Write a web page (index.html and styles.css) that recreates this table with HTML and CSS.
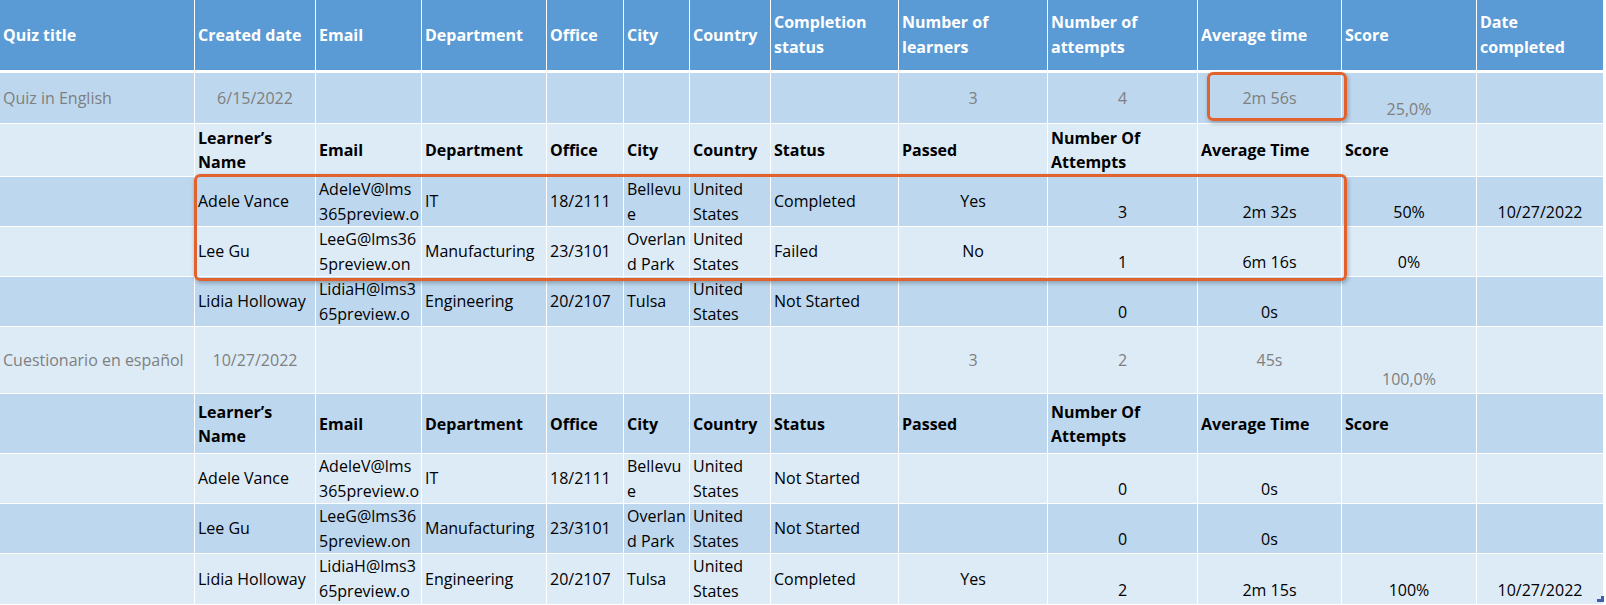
FILE: index.html
```html
<!DOCTYPE html>
<html lang="en">
<head>
<meta charset="utf-8">
<title>Quiz report</title>
<link rel="stylesheet" href="styles.css">
</head>
<body>
<div class="sheet">
  <div class="row head">
    <div class="cell">Quiz title</div>
    <div class="cell">Created date</div>
    <div class="cell">Email</div>
    <div class="cell">Department</div>
    <div class="cell">Office</div>
    <div class="cell">City</div>
    <div class="cell">Country</div>
    <div class="cell">Completion<br>status</div>
    <div class="cell">Number of<br>learners</div>
    <div class="cell">Number of<br>attempts</div>
    <div class="cell">Average time</div>
    <div class="cell">Score</div>
    <div class="cell">Date<br>completed</div>
  </div>

  <div class="row quiz band-a h-quiz1">
    <div class="cell">Quiz in English</div>
    <div class="cell center">6/15/2022</div>
    <div class="cell"></div>
    <div class="cell"></div>
    <div class="cell"></div>
    <div class="cell"></div>
    <div class="cell"></div>
    <div class="cell"></div>
    <div class="cell center">3</div>
    <div class="cell center">4</div>
    <div class="cell center">2m 56s</div>
    <div class="cell center bottom">25,0%</div>
    <div class="cell"></div>
  </div>

  <div class="row sub band-b h-sub1">
    <div class="cell"></div>
    <div class="cell">Learner’s<br>Name</div>
    <div class="cell">Email</div>
    <div class="cell">Department</div>
    <div class="cell">Office</div>
    <div class="cell">City</div>
    <div class="cell">Country</div>
    <div class="cell">Status</div>
    <div class="cell">Passed</div>
    <div class="cell">Number Of<br>Attempts</div>
    <div class="cell">Average Time</div>
    <div class="cell">Score</div>
    <div class="cell"></div>
  </div>

  <div class="row band-a h-data">
    <div class="cell"></div>
    <div class="cell">Adele Vance</div>
    <div class="cell">AdeleV@lms<br>365preview.o</div>
    <div class="cell">IT</div>
    <div class="cell">18/2111</div>
    <div class="cell">Bellevu<br>e</div>
    <div class="cell">United<br>States</div>
    <div class="cell">Completed</div>
    <div class="cell center">Yes</div>
    <div class="cell center bottom">3</div>
    <div class="cell center bottom">2m 32s</div>
    <div class="cell center bottom">50%</div>
    <div class="cell center bottom">10/27/2022</div>
  </div>

  <div class="row band-b h-data">
    <div class="cell"></div>
    <div class="cell">Lee Gu</div>
    <div class="cell">LeeG@lms36<br>5preview.on</div>
    <div class="cell">Manufacturing</div>
    <div class="cell">23/3101</div>
    <div class="cell">Overlan<br>d Park</div>
    <div class="cell">United<br>States</div>
    <div class="cell">Failed</div>
    <div class="cell center">No</div>
    <div class="cell center bottom">1</div>
    <div class="cell center bottom">6m 16s</div>
    <div class="cell center bottom">0%</div>
    <div class="cell"></div>
  </div>

  <div class="row band-a h-data">
    <div class="cell"></div>
    <div class="cell">Lidia Holloway</div>
    <div class="cell">LidiaH@lms3<br>65preview.o</div>
    <div class="cell">Engineering</div>
    <div class="cell">20/2107</div>
    <div class="cell">Tulsa</div>
    <div class="cell">United<br>States</div>
    <div class="cell">Not Started</div>
    <div class="cell"></div>
    <div class="cell center bottom">0</div>
    <div class="cell center bottom">0s</div>
    <div class="cell"></div>
    <div class="cell"></div>
  </div>

  <div class="row quiz band-b h-quiz2">
    <div class="cell">Cuestionario en español</div>
    <div class="cell center">10/27/2022</div>
    <div class="cell"></div>
    <div class="cell"></div>
    <div class="cell"></div>
    <div class="cell"></div>
    <div class="cell"></div>
    <div class="cell"></div>
    <div class="cell center">3</div>
    <div class="cell center">2</div>
    <div class="cell center">45s</div>
    <div class="cell center bottom">100,0%</div>
    <div class="cell"></div>
  </div>

  <div class="row sub band-a h-sub2">
    <div class="cell"></div>
    <div class="cell">Learner’s<br>Name</div>
    <div class="cell">Email</div>
    <div class="cell">Department</div>
    <div class="cell">Office</div>
    <div class="cell">City</div>
    <div class="cell">Country</div>
    <div class="cell">Status</div>
    <div class="cell">Passed</div>
    <div class="cell">Number Of<br>Attempts</div>
    <div class="cell">Average Time</div>
    <div class="cell">Score</div>
    <div class="cell"></div>
  </div>

  <div class="row band-b h-data">
    <div class="cell"></div>
    <div class="cell">Adele Vance</div>
    <div class="cell">AdeleV@lms<br>365preview.o</div>
    <div class="cell">IT</div>
    <div class="cell">18/2111</div>
    <div class="cell">Bellevu<br>e</div>
    <div class="cell">United<br>States</div>
    <div class="cell">Not Started</div>
    <div class="cell"></div>
    <div class="cell center bottom">0</div>
    <div class="cell center bottom">0s</div>
    <div class="cell"></div>
    <div class="cell"></div>
  </div>

  <div class="row band-a h-data">
    <div class="cell"></div>
    <div class="cell">Lee Gu</div>
    <div class="cell">LeeG@lms36<br>5preview.on</div>
    <div class="cell">Manufacturing</div>
    <div class="cell">23/3101</div>
    <div class="cell">Overlan<br>d Park</div>
    <div class="cell">United<br>States</div>
    <div class="cell">Not Started</div>
    <div class="cell"></div>
    <div class="cell center bottom">0</div>
    <div class="cell center bottom">0s</div>
    <div class="cell"></div>
    <div class="cell"></div>
  </div>

  <div class="row band-b h-last">
    <div class="cell"></div>
    <div class="cell">Lidia Holloway</div>
    <div class="cell">LidiaH@lms3<br>65preview.o</div>
    <div class="cell">Engineering</div>
    <div class="cell">20/2107</div>
    <div class="cell">Tulsa</div>
    <div class="cell">United<br>States</div>
    <div class="cell">Completed</div>
    <div class="cell center">Yes</div>
    <div class="cell center bottom">2</div>
    <div class="cell center bottom">2m 15s</div>
    <div class="cell center bottom">100%</div>
    <div class="cell center bottom">10/27/2022</div>
  </div>

  <div class="callout callout-avg"></div>
  <div class="callout callout-rows"></div>
  <svg class="resize-handle" width="7" height="6" viewBox="0 0 7 6" aria-hidden="true">
    <polygon points="4,0 7,0 7,6 0,6 0,3 4,3" fill="#3f5fae"/>
  </svg>
</div>
</body>
</html>
```

FILE: styles.css
```css
html, body {
  margin: 0;
  padding: 0;
  background: #ffffff;
}

body {
  font-family: "Open Sans", "Noto Sans", "DejaVu Sans", sans-serif;
  font-size: 16px;
  color: #000000;
}

.sheet {
  position: relative;
  width: 1603px;
  display: flex;
  flex-direction: column;
  gap: 1px;
  background: #ffffff;
}

.row {
  display: grid;
  grid-template-columns: 194px 120px 105px 124px 76px 65px 80px 127px 148px 149px 143px 134px 126px;
  column-gap: 1px;
}

.cell {
  display: flex;
  align-items: center;
  padding: 0 3px;
  line-height: 25px;
  white-space: nowrap;
  overflow: hidden;
}

.cell.center {
  justify-content: center;
  text-align: center;
}

.cell.bottom {
  align-items: flex-end;
  padding-bottom: 1px;
}

/* header */
.head {
  height: 70px;
  margin-bottom: 2px;
}

.head .cell {
  background: #5b9bd5;
  color: #ffffff;
  font-weight: 700;
}

/* bands */
.band-a .cell {
  background: #bdd7ee;
}

.band-b .cell {
  background: #ddebf7;
}

.quiz .cell {
  color: #7f7f7f;
}

.sub .cell {
  font-weight: 700;
  line-height: 24px;
}

/* row heights */
.h-quiz1 { height: 50px; }
.h-sub1 { height: 52px; }
.h-data { height: 49px; }
.h-quiz2 { height: 66px; }
.h-sub2 { height: 59px; }
.h-last { height: 50px; }

/* orange call-out frames */
.callout {
  position: absolute;
  border: 3px solid #e2622e;
  border-radius: 6px;
  box-sizing: border-box;
  box-shadow: 1px 2px 4px rgba(0, 0, 0, 0.28);
  pointer-events: none;
}

.callout-avg {
  left: 1207px;
  top: 72px;
  width: 140px;
  height: 49px;
}

.callout-rows {
  left: 194px;
  top: 174px;
  width: 1153px;
  height: 107px;
}

.resize-handle {
  position: absolute;
  left: 1597px;
  top: 596px;
}
```
